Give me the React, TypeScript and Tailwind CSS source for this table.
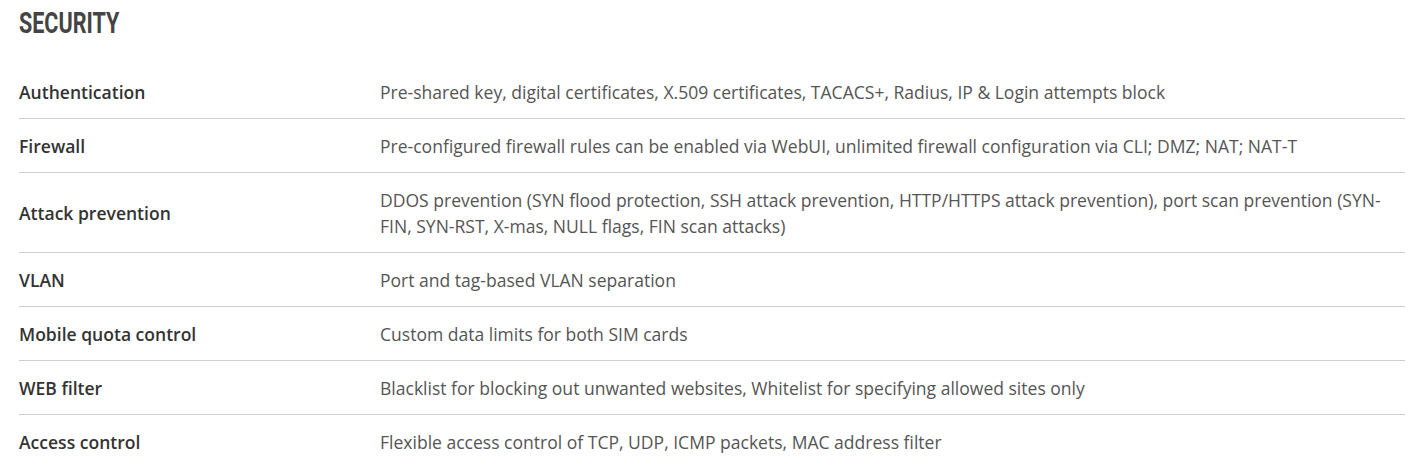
const rows = [
  {
    label: "Authentication",
    value:
      "Pre-shared key, digital certificates, X.509 certificates, TACACS+, Radius, IP & Login attempts block",
  },
  {
    label: "Firewall",
    value:
      "Pre-configured firewall rules can be enabled via WebUI, unlimited firewall configuration via CLI; DMZ; NAT; NAT-T",
  },
  {
    label: "Attack prevention",
    value:
      "DDOS prevention (SYN flood protection, SSH attack prevention, HTTP/HTTPS attack prevention), port scan prevention (SYN-FIN, SYN-RST, X-mas, NULL flags, FIN scan attacks)",
  },
  { label: "VLAN", value: "Port and tag-based VLAN separation" },
  { label: "Mobile quota control", value: "Custom data limits for both SIM cards" },
  {
    label: "WEB filter",
    value:
      "Blacklist for blocking out unwanted websites, Whitelist for specifying allowed sites only",
  },
  {
    label: "Access control",
    value: "Flexible access control of TCP, UDP, ICMP packets, MAC address filter",
  },
];

export default function App() {
  return (
    <div className="w-[1412px] h-[470px] bg-white pl-[19px] pr-[7px] font-['Open_Sans',sans-serif] overflow-hidden">
      {/* Heading */}
      <div className="pt-[5px] h-[65px]">
        <h2 className="inline-block origin-left scale-x-[0.73] font-['Roboto',sans-serif] font-bold text-[29.5px] leading-[36px] text-[#444]">
          SECURITY
        </h2>
      </div>

      {/* Spec table */}
      <div className="flex flex-col">
        {rows.map((row, i) => (
          <div
            key={row.label}
            className={`flex py-[13.5px] text-[17.55px] leading-[26px] ${
              i < rows.length - 1 ? "border-b border-[#cfcfcf]" : ""
            }`}
          >
            <div className="w-[361px] shrink-0 flex items-center font-semibold text-[#333]">
              {row.label}
            </div>
            <div className="flex-1 text-[#555]">{row.value}</div>
          </div>
        ))}
      </div>
    </div>
  );
}
